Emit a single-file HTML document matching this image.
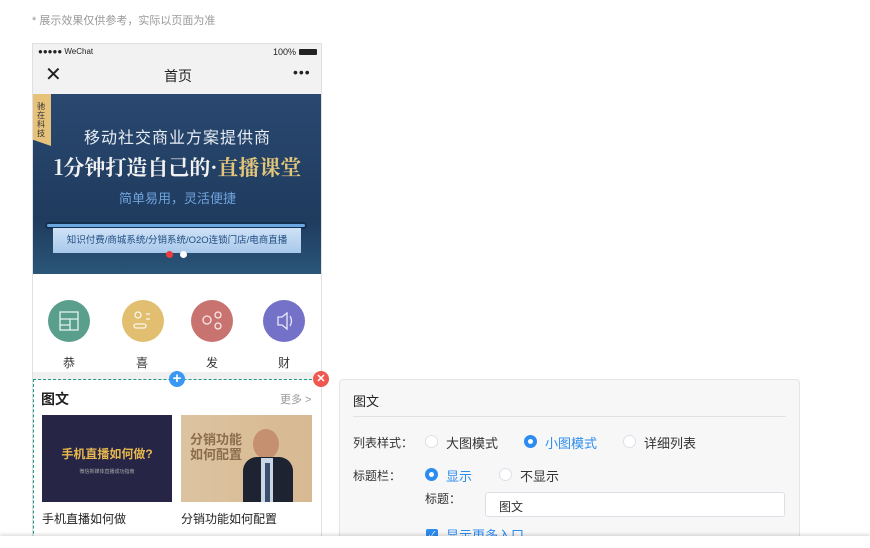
<!DOCTYPE html>
<html><head><meta charset="utf-8"><style>
*{margin:0;padding:0;box-sizing:border-box}
html,body{width:870px;height:548px;overflow:hidden}
body{background:#fff;font-family:"Liberation Sans","Noto Sans CJK SC",sans-serif;position:relative;color:#333}
.a{position:absolute}
.rad{position:absolute;width:13px;height:13px;border-radius:50%;border:1px solid #dcdfe6;background:#fff}
.rad.on{border:4px solid #2d8cf0;background:#fff}
</style></head><body>
<div class="a" style="left:32px;top:12px;font-size:11px;color:#999">* 展示效果仅供参考，实际以页面为准</div>

<div class="a" style="left:32px;top:43px;width:290px;height:505px;border:1px solid #e0e0e0;background:#fff;overflow:hidden">
  <div class="a" style="left:0;top:0;width:290px;height:50px;background:#f2f2f2"></div>
  <div class="a" style="left:5px;top:3px;font-size:8px;color:#222">●●●●● WeChat</div>
  <div class="a" style="left:240px;top:3px;font-size:9px;color:#222">100%</div>
  <div class="a" style="left:266px;top:5px;width:18px;height:6px;background:#222;border-radius:1px"></div>
  <div class="a" style="left:12px;top:20px;font-size:20px;color:#222;line-height:22px">✕</div>
  <div class="a" style="left:0;top:22px;width:290px;text-align:center;font-size:14px;color:#222">首页</div>
  <div class="a" style="left:260px;top:20px;font-size:14px;color:#222;letter-spacing:1px">•••</div>
  <div class="a" style="left:0;top:50px;width:289px;height:180px;background:linear-gradient(180deg,#2a4870,#1f3b5e 70%,#2a5678)">
    <div class="a" style="left:0;top:0;width:18px;height:52px;background:#e6c27a;font-size:8px;color:#333;line-height:9px;padding:8px 4px 0;clip-path:polygon(0 0,100% 0,100% 100%,0 88%)">驰在科技</div>
    <div class="a" style="left:0;top:30px;width:289px;text-align:center;font-size:16px;color:#e8eef5;letter-spacing:1px">移动社交商业方案提供商</div>
    <div class="a" style="left:0;top:58px;width:289px;text-align:center;font-size:21px;font-weight:bold;color:#f2f2f2;font-family:'Noto Serif CJK SC',serif;white-space:nowrap">1分钟打造自己的·<span style="color:#e3c57a">直播课堂</span></div>
    <div class="a" style="left:0;top:94px;width:289px;text-align:center;font-size:13px;color:#6fa4dd">简单易用，灵活便捷</div>
    <div class="a" style="left:12px;top:128px;width:262px;height:7px;background:#6aa6e0;border-radius:4px;border:2px solid #15304f"></div>
    <div class="a" style="left:20px;top:134px;width:248px;height:25px;background:linear-gradient(#cfe2f7,#a8c8ea);font-size:9.5px;color:#1f4c80;text-align:center;line-height:25px;white-space:nowrap">知识付费/商城系统/分销系统/O2O连锁门店/电商直播</div>
    <div class="a" style="left:133px;top:157px;width:7px;height:7px;border-radius:50%;background:#f03c3c"></div>
    <div class="a" style="left:147px;top:157px;width:7px;height:7px;border-radius:50%;background:#fff"></div>
  </div>
  <div class="a" style="left:15px;top:256px;width:42px;height:42px;border-radius:50%;background:#5a9e8c"></div>
  <div class="a" style="left:89px;top:256px;width:42px;height:42px;border-radius:50%;background:#e2bf70"></div>
  <div class="a" style="left:158px;top:256px;width:42px;height:42px;border-radius:50%;background:#c97370"></div>
  <div class="a" style="left:230px;top:256px;width:42px;height:42px;border-radius:50%;background:#7471c8"></div>
  <svg class="a" style="left:0;top:256px" width="290" height="42" fill="none" stroke="#fff" stroke-width="1.3" opacity=".85">
    <rect x="27" y="12" width="18" height="18"/><path d="M27 19h18M27 25h10M37 19v11"/>
    <circle cx="105" cy="15" r="3"/><rect x="101" y="24" width="12" height="4" rx="2"/><path d="M113 14h4M113 19h4"/>
    <circle cx="174" cy="20" r="4"/><circle cx="185" cy="15" r="3"/><circle cx="185" cy="26" r="3"/>
    <path d="M245 17h4l5-4v16l-5-4h-4zM257 16q3 5 0 10"/>
  </svg>
  <div class="a" style="left:0;top:310px;width:290px;font-size:12px;color:#333">
    <span class="a" style="left:30px">恭</span><span class="a" style="left:103px">喜</span><span class="a" style="left:173px">发</span><span class="a" style="left:245px">财</span>
  </div>
  <div class="a" style="left:0;top:328px;width:290px;height:8px;background:#f0f0f0"></div>
  <div class="a" style="left:0;top:335px;width:289px;height:180px;border:1px dashed #1e9a8a;border-bottom:none"></div>
  <div class="a" style="left:8px;top:345px;font-size:14px;font-weight:bold;color:#222">图文</div>
  <div class="a" style="left:247px;top:347px;font-size:11px;color:#999">更多 &gt;</div>
  <div class="a" style="left:9px;top:371px;width:130px;height:87px;background:#272546">
    <div style="margin-top:30px;text-align:center;color:#e7b84e;font-size:12px;font-weight:bold">手机直播如何做?</div>
    <div style="margin-top:6px;text-align:center;color:#aaa;font-size:5px">微信新媒体直播成功指南</div>
  </div>
  <div class="a" style="left:148px;top:371px;width:131px;height:87px;background:linear-gradient(90deg,#dcc3a0,#d7b992)">
    <div style="position:absolute;left:9px;top:17px;color:#8a6e4e;font-size:13px;font-weight:bold;line-height:15px">分销功能<br>如何配置</div>
    <div style="position:absolute;left:72px;top:14px;width:26px;height:30px;border-radius:50%;background:#c49070"></div>
    <div style="position:absolute;left:62px;top:42px;width:50px;height:45px;background:#1d2330;border-radius:14px 14px 0 0"></div>
    <div style="position:absolute;left:80px;top:43px;width:12px;height:44px;background:#c9d6e6"></div>
    <div style="position:absolute;left:84px;top:48px;width:5px;height:39px;background:#3b4e6e"></div>
  </div>
  <div class="a" style="left:9px;top:466px;font-size:12px;color:#222">手机直播如何做</div>
  <div class="a" style="left:148px;top:466px;font-size:12px;color:#222">分销功能如何配置</div>
</div>
<div class="a" style="left:169px;top:371px;width:16px;height:16px;border-radius:50%;background:#3a97f3;color:#fff;font-size:15px;line-height:15px;text-align:center;font-weight:bold">+</div>
<div class="a" style="left:313px;top:371px;width:16px;height:16px;border-radius:50%;background:#f0574e;color:#fff;font-size:11px;line-height:16px;text-align:center;font-weight:bold">✕</div>

<div class="a" style="left:339px;top:379px;width:461px;height:180px;background:#f7f7f7;border:1px solid #e4e4e4;border-radius:4px">
  <div class="a" style="left:13px;top:11px;font-size:13px;color:#222">图文</div>
  <div class="a" style="left:13px;top:36px;width:433px;height:1px;background:#e2e2e2"></div>
  <div class="a" style="left:13px;top:54px;font-size:12px;color:#333">列表样式：</div>
  <div class="rad" style="left:85px;top:55px"></div><div class="a" style="left:106px;top:53px;font-size:13px">大图模式</div>
  <div class="rad on" style="left:184px;top:55px"></div><div class="a" style="left:205px;top:53px;font-size:13px;color:#2d8cf0">小图模式</div>
  <div class="rad" style="left:283px;top:55px"></div><div class="a" style="left:304px;top:53px;font-size:13px">详细列表</div>
  <div class="a" style="left:13px;top:87px;font-size:12px">标题栏：</div>
  <div class="rad on" style="left:85px;top:88px"></div><div class="a" style="left:106px;top:86px;font-size:13px;color:#2d8cf0">显示</div>
  <div class="rad" style="left:159px;top:88px"></div><div class="a" style="left:180px;top:86px;font-size:13px">不显示</div>
  <div class="a" style="left:85px;top:110px;font-size:12px">标题：</div>
  <div class="a" style="left:145px;top:112px;width:300px;height:25px;background:#fff;border:1px solid #dcdfe6;border-radius:3px;font-size:12px;padding:5px 13px;color:#333">图文</div>
  <div class="a" style="left:86px;top:149px;width:12px;height:12px;background:#2d8cf0;border-radius:2px;color:#fff;font-size:9px;line-height:12px;text-align:center">✓</div>
  <div class="a" style="left:106px;top:145px;font-size:13px;color:#2d8cf0">显示更多入口</div>
</div>
<div class="a" style="left:0;top:536px;width:870px;height:12px;background:#fff;box-shadow:0 -2px 3px rgba(0,0,0,.12)"></div>
</body></html>
